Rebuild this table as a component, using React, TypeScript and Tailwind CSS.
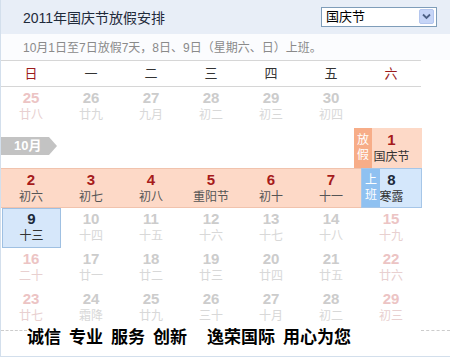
import type { JSX } from 'react';

type Tone = 'gray' | 'pink';
type Day = { n: number; l: string; tone: Tone };

const sep: Day[] = [
  { n: 25, l: '廿八', tone: 'pink' },
  { n: 26, l: '廿九', tone: 'gray' },
  { n: 27, l: '九月', tone: 'gray' },
  { n: 28, l: '初二', tone: 'gray' },
  { n: 29, l: '初三', tone: 'gray' },
  { n: 30, l: '初四', tone: 'gray' },
];

const holiday = [
  { n: 2, l: '初六' },
  { n: 3, l: '初七' },
  { n: 4, l: '初八' },
  { n: 5, l: '重阳节' },
  { n: 6, l: '初十' },
  { n: 7, l: '十一' },
];

const week4: Day[] = [
  { n: 10, l: '十四', tone: 'gray' },
  { n: 11, l: '十五', tone: 'gray' },
  { n: 12, l: '十六', tone: 'gray' },
  { n: 13, l: '十七', tone: 'gray' },
  { n: 14, l: '十八', tone: 'gray' },
  { n: 15, l: '十九', tone: 'pink' },
];

const week5: Day[] = [
  { n: 16, l: '二十', tone: 'pink' },
  { n: 17, l: '廿一', tone: 'gray' },
  { n: 18, l: '廿二', tone: 'gray' },
  { n: 19, l: '廿三', tone: 'gray' },
  { n: 20, l: '廿四', tone: 'gray' },
  { n: 21, l: '廿五', tone: 'gray' },
  { n: 22, l: '廿六', tone: 'pink' },
];

const week6: Day[] = [
  { n: 23, l: '廿七', tone: 'pink' },
  { n: 24, l: '霜降', tone: 'gray' },
  { n: 25, l: '廿九', tone: 'gray' },
  { n: 26, l: '三十', tone: 'gray' },
  { n: 27, l: '十月', tone: 'gray' },
  { n: 28, l: '初二', tone: 'gray' },
  { n: 29, l: '初三', tone: 'pink' },
];

const weekdays = ['日', '一', '二', '三', '四', '五', '六'];

const Faded = ({ n, l, tone }: Day): JSX.Element => (
  <div className="h-10 flex flex-col items-center pt-[2px]">
    <span className={`text-[15px] font-bold leading-[18px] ${tone === 'pink' ? 'text-[#ecc4c4]' : 'text-[#cccccc]'}`}>{n}</span>
    <span className={`text-[12px] leading-[16px] ${tone === 'pink' ? 'text-[#e8d0d0]' : 'text-[#d8d8d8]'}`}>{l}</span>
  </div>
);

const Badge = ({ text, className }: { text: string; className: string }): JSX.Element => (
  <div className={`absolute top-0 bottom-0 w-[18px] flex flex-col items-center justify-center text-[12px] leading-[15px] text-white ${className}`}>
    {text.split('').map((c) => (
      <span key={c}>{c}</span>
    ))}
  </div>
);

export default function App(): JSX.Element {
  return (
    <div className="w-[450px] h-[361px] bg-white font-['Liberation_Sans','Noto_Sans_CJK_SC',sans-serif] overflow-hidden">
      <div className="border-l border-b border-[#d3dfec]">
        {/* header */}
        <div className="h-[34px] bg-[#e8eef7] flex items-center justify-between pl-[22px] pr-[13px]">
          <span className="text-[14px] text-[#1f2a3a] pt-[3px]">2011年国庆节放假安排</span>
          <div className="w-[116px] h-[20px] bg-white border border-[#7f9db9] flex items-center justify-between pl-[4px] pr-[2px] -mt-[1px]">
            <span className="text-[13px] text-black leading-none">国庆节</span>
            <div className="w-[15px] h-[15px] rounded-[2px] bg-[#c6d5f7] border border-[#b4c6ee] flex items-center justify-center">
              <svg width="9" height="7" viewBox="0 0 9 7">
                <path d="M1 1.5 L4.5 5 L8 1.5" fill="none" stroke="#4d6185" strokeWidth="1.8" />
              </svg>
            </div>
          </div>
        </div>

        {/* subtitle */}
        <div className="h-[26px] bg-[#fbfcfe] flex items-center pl-[22px] pt-[1px]">
          <span className="text-[12px] text-[#8a8a8a]">10月1日至7日放假7天，8日、9日（星期六、日）上班。</span>
        </div>

        {/* weekday header */}
        <div className="w-[420px] h-[27px] border-y border-[#d6d6d6] grid grid-cols-7">
          {weekdays.map((w, i) => (
            <div
              key={w}
              className={`flex items-center justify-center text-[13px] ${i === 0 || i === 6 ? 'text-[#9b1b1b]' : 'text-[#333333]'}`}
            >
              {w}
            </div>
          ))}
        </div>

        {/* week 1 */}
        <div className="w-[420px] h-[41px] grid grid-cols-7">
          {sep.map((d) => (
            <Faded key={d.n} {...d} />
          ))}
        </div>

        {/* week 2 */}
        <div className="w-[421px] h-10 flex items-start">
          <div className="mt-[9px] h-[18px] w-[56px] bg-[#c3c3c3] text-white text-[13px] font-bold leading-[18px] pl-[13px] [clip-path:polygon(0_0,calc(100%-8px)_0,100%_50%,calc(100%-8px)_100%,0_100%)]">
            10月
          </div>
          <div className="ml-auto relative w-[61px] h-10 bg-[#fdd9c7] flex flex-col items-center pt-[3px]">
            <Badge text="放假" className="left-[-7px] bg-[#f7ad88]" />
            <span className="text-[15px] font-bold leading-[18px] text-[#a61b1b]">1</span>
            <span className="text-[12px] leading-[16px] text-[#333333]">国庆节</span>
          </div>
        </div>

        {/* week 3 */}
        <div className="h-10 flex">
          <div className="w-[360px] h-10 bg-[#fdd9c7] border-y border-[#f1c3ad] grid grid-cols-6">
            {holiday.map((d) => (
              <div key={d.n} className="flex flex-col items-center pt-[2px]">
                <span className="text-[15px] font-bold leading-[18px] text-[#a61b1b]">{d.n}</span>
                <span className="text-[12px] leading-[16px] text-[#555555]">{d.l}</span>
              </div>
            ))}
          </div>
          <div className="relative w-[61px] h-10 bg-[#d4e7fb] border border-[#a6c6e8] flex flex-col items-center pt-[2px]">
            <Badge text="上班" className="left-0 bg-[#8fc1f1]" />
            <span className="text-[15px] font-bold leading-[18px] text-[#1c2a3b]">8</span>
            <span className="text-[12px] leading-[16px] text-[#333333]">寒露</span>
          </div>
        </div>

        {/* week 4 */}
        <div className="w-[420px] h-10 grid grid-cols-7">
          <div className="h-10 ml-[1px] bg-[#d6e7fa] border border-[#9fc0e2] flex flex-col items-center pt-[1px]">
            <span className="text-[15px] font-bold leading-[18px] text-[#1c2a3b]">9</span>
            <span className="text-[12px] leading-[16px] text-[#333333]">十三</span>
          </div>
          {week4.map((d) => (
            <Faded key={d.n} {...d} />
          ))}
        </div>

        {/* week 5 */}
        <div className="w-[420px] h-10 grid grid-cols-7">
          {week5.map((d) => (
            <Faded key={d.n} {...d} />
          ))}
        </div>

        {/* week 6 */}
        <div className="w-[420px] h-10 grid grid-cols-7">
          {week6.map((d) => (
            <Faded key={d.n} {...d} />
          ))}
        </div>

        {/* footer slogan */}
        <div className="h-[28px] flex items-start">
          <div className="w-[26px] mt-[2px] border-t border-dashed border-[#cccccc]" />
          <div className="flex text-[17px] font-bold leading-[20px] text-black gap-[8px]">
            <span>诚信</span>
            <span>专业</span>
            <span>服务</span>
            <span>创新</span>
            <span className="ml-[12px]">逸荣国际</span>
            <span>用心为您</span>
          </div>
          <div className="ml-auto w-[29px] mt-[2px] border-t border-dashed border-[#cccccc]" />
        </div>
      </div>
    </div>
  );
}
